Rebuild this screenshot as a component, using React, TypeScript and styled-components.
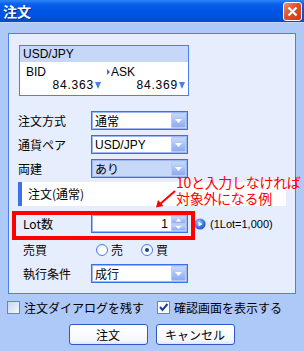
import styled, { createGlobalStyle } from "styled-components";

const GlobalStyle = createGlobalStyle`
  html, body {
    margin: 0;
    padding: 0;
    background: #aec8f8;
  }
  body {
    font-family: "Liberation Sans", "Noto Sans CJK JP", sans-serif;
    font-size: 12px;
    color: #000;
  }
`;

const DropArrow = () => (
  <DropButton>
    <svg width="15" height="15" viewBox="0 0 15 15">
      <path d="M4 6 L11 6 L7.5 10 Z" fill="#fff" />
    </svg>
  </DropButton>
);

const SelectBox = ({ value, active }: { value: string; active?: boolean }) => (
  <Select $active={active}>
    <SelectText>{value}</SelectText>
    <DropArrow />
  </Select>
);

const App = () => {
  return (
    <>
      <GlobalStyle />
      <Window>
        <TitleBar>
          <Title>注文</Title>
          <CloseButton>
            <svg width="11" height="11" viewBox="0 0 11 11">
              <path d="M1.5 1.5 L9.5 9.5 M9.5 1.5 L1.5 9.5" stroke="#fff" strokeWidth="2.2" />
            </svg>
          </CloseButton>
        </TitleBar>

        <Panel>
          <QuoteBox>
            <QuoteHeader>USD/JPY</QuoteHeader>
            <QuoteBody>
              <QuoteCol>
                <QuoteLabel $pad={6}>BID</QuoteLabel>
                <QuotePrice>
                  84.363<DownMark />
                </QuotePrice>
              </QuoteCol>
              <QuoteCol>
                <QuoteLabel $pad={3}>
                  <SideMark />
                  ASK
                </QuoteLabel>
                <QuotePrice>
                  84.369<DownMark />
                </QuotePrice>
              </QuoteCol>
            </QuoteBody>
          </QuoteBox>

          <Row $top={15} $indent={9}>
            <Label>注文方式</Label>
            <SelectBox value="通常" />
          </Row>
          <Row $top={5} $indent={9}>
            <Label>通貨ペア</Label>
            <SelectBox value="USD/JPY" />
          </Row>
          <Row $top={5} $indent={9}>
            <Label>両建</Label>
            <SelectBox value="あり" active />
          </Row>

          <SectionHeader>注文(通常)</SectionHeader>

          <LotRow>
            <Row $top={0} $indent={14}>
              <Label>Lot数</Label>
              <NumberBox>
                <NumberText>1</NumberText>
                <Spin>
                  <SpinHalf>
                    <svg width="15" height="8" viewBox="0 0 15 8">
                      <path d="M4.5 5.5 L10.5 5.5 L7.5 2.5 Z" fill="#fff" />
                    </svg>
                  </SpinHalf>
                  <SpinHalf>
                    <svg width="15" height="8" viewBox="0 0 15 8">
                      <path d="M4.5 2 L10.5 2 L7.5 5 Z" fill="#fff" />
                    </svg>
                  </SpinHalf>
                </Spin>
              </NumberBox>
            </Row>
            <InfoIcon>
              <svg width="12" height="12" viewBox="0 0 12 12">
                <defs>
                  <radialGradient id="ig" cx="40%" cy="35%" r="70%">
                    <stop offset="0%" stopColor="#a8c8ff" />
                    <stop offset="60%" stopColor="#3a78e8" />
                    <stop offset="100%" stopColor="#1d4fc0" />
                  </radialGradient>
                </defs>
                <circle cx="6" cy="6" r="5.6" fill="url(#ig)" />
                <path d="M4.6 3.4 L8.4 6 L4.6 8.6 Z" fill="#fff" />
              </svg>
            </InfoIcon>
            <Hint>(1Lot=1,000)</Hint>
            <RedFrame />
          </LotRow>

          <Row $top={7} $indent={14}>
            <Label>売買</Label>
            <RadioGroup>
              <RadioItem>
                <Radio />
                売
              </RadioItem>
              <RadioItem>
                <Radio $checked />
                買
              </RadioItem>
            </RadioGroup>
          </Row>

          <Row $top={5} $indent={14}>
            <Label>執行条件</Label>
            <SelectBox value="成行" />
          </Row>
        </Panel>

        <CheckRow>
          <CheckItem>
            <CheckBox />
            注文ダイアログを残す
          </CheckItem>
          <CheckItem>
            <CheckBox $checked>
              <svg width="11" height="11" viewBox="0 0 11 11">
                <path d="M2 5 L4.5 8 L9.5 2" stroke="#1c3f9c" strokeWidth="2" fill="none" />
              </svg>
            </CheckBox>
            確認画面を表示する
          </CheckItem>
        </CheckRow>

        <ButtonRow>
          <Button>注文</Button>
          <Button>キャンセル</Button>
        </ButtonRow>

        <Annotation>
          10と入力しなければ
          <br />
          対象外になる例
        </Annotation>
        <Arrow width="24" height="20" viewBox="0 0 24 20">
          <path d="M20 2 L4 16" stroke="#f00" strokeWidth="2" />
          <path d="M1 18.5 L3 11 L8.5 17 Z" fill="#f00" />
        </Arrow>
      </Window>
    </>
  );
};

const Window = styled.div`
  position: relative;
  width: 304px;
  height: 351px;
  background: #aec8f8;
  overflow: hidden;
`;

const TitleBar = styled.div`
  height: 22px;
  display: flex;
  align-items: center;
  justify-content: space-between;
  padding: 0 2px 0 3px;
  background: linear-gradient(
    #2f86f8 0%,
    #0a60ec 18%,
    #0055e4 50%,
    #0052de 80%,
    #0a48c8 100%
  );
  border-bottom: 1px solid #c6d8fa;
`;

const Title = styled.span`
  font-family: "Noto Sans CJK JP", sans-serif;
  font-weight: bold;
  font-size: 14px;
  color: #fff;
  text-shadow: 1px 1px 0 #0a2c90;
  line-height: 22px;
`;

const CloseButton = styled.div`
  width: 19px;
  height: 19px;
  box-sizing: border-box;
  border: 1px solid #fff;
  border-radius: 3px;
  background: linear-gradient(135deg, #f09070 0%, #e0502a 45%, #c83818 100%);
  display: flex;
  align-items: center;
  justify-content: center;
`;

const Panel = styled.div`
  margin: 10px 8px 0 8px;
  height: 261px;
  box-sizing: border-box;
  border: 1px solid #4c7fee;
  background: #e6eefd;
  padding-top: 11px;
`;

const QuoteBox = styled.div`
  margin-left: 10px;
  width: 170px;
  height: 51px;
  box-sizing: border-box;
  border: 1px solid #4a80f0;
  background: #fff;
`;

const QuoteHeader = styled.div`
  height: 16px;
  line-height: 16px;
  padding-left: 3px;
  background: #c6d7f8;
  font-size: 12px;
`;

const QuoteBody = styled.div`
  display: grid;
  grid-template-columns: 84px 84px;
  height: 33px;
`;

const QuoteCol = styled.div`
  display: flex;
  flex-direction: column;
  padding-top: 3px;
`;

const QuoteLabel = styled.div<{ $pad: number }>`
  display: flex;
  align-items: center;
  gap: 1px;
  padding-left: ${(p) => p.$pad}px;
  height: 13px;
  font-size: 12px;
`;

const SideMark = styled.span`
  width: 0;
  height: 0;
  border-top: 3px solid transparent;
  border-bottom: 3px solid transparent;
  border-left: 3px solid #3a6ee8;
`;

const QuotePrice = styled.div`
  display: flex;
  align-items: center;
  justify-content: flex-end;
  padding-right: 3px;
  height: 14px;
  font-size: 12px;
  letter-spacing: 0.8px;
`;

const DownMark = styled.span`
  margin-left: 1px;
  width: 0;
  height: 0;
  border-left: 3px solid transparent;
  border-right: 3px solid transparent;
  border-top: 7px solid #4a7ef0;
`;

const Row = styled.div<{ $top: number; $indent: number }>`
  display: grid;
  grid-template-columns: 82px 97px;
  align-items: center;
  height: 19px;
  margin-top: ${(p) => p.$top}px;
  & > :first-child {
    padding-left: ${(p) => p.$indent}px;
  }
`;

const Label = styled.span`
  font-family: "Noto Sans CJK JP", sans-serif;
  font-size: 12px;
  white-space: nowrap;
`;

const Select = styled.div<{ $active?: boolean }>`
  display: flex;
  align-items: center;
  justify-content: space-between;
  height: 19px;
  box-sizing: border-box;
  border: 1px solid #3c6ef0;
  box-shadow: inset 0 0 0 1px #9ab6f4;
  background: ${(p) => (p.$active ? "#c8d8f8" : "#fff")};
  padding: 0 1px 0 3px;
`;

const SelectText = styled.span`
  font-family: "Liberation Sans", "Noto Sans CJK JP", sans-serif;
  font-size: 12px;
`;

const DropButton = styled.div`
  width: 15px;
  height: 15px;
  box-sizing: border-box;
  border: 1px solid #b8ccf8;
  border-radius: 1px;
  background: linear-gradient(#c6d8fc, #8eabf2);
  display: flex;

  svg {
    margin: -1px;
  }
`;

const SectionHeader = styled.div`
  margin: 4px 9px 0 9px;
  height: 24px;
  box-sizing: border-box;
  background: #fff;
  border-left: 4px solid #3c70f0;
  padding-left: 6px;
  line-height: 24px;
  font-family: "Noto Sans CJK JP", sans-serif;
  font-size: 12px;
`;

const LotRow = styled.div`
  position: relative;
  display: flex;
  align-items: center;
  margin-top: 8px;
`;

const RedFrame = styled.div`
  position: absolute;
  left: 3px;
  top: -3px;
  width: 183px;
  height: 29px;
  box-sizing: border-box;
  border: 4px solid #f00;
  pointer-events: none;
`;

const NumberBox = styled.div`
  display: flex;
  align-items: center;
  justify-content: flex-end;
  height: 19px;
  box-sizing: border-box;
  border: 1px solid #3c6ef0;
  box-shadow: inset 0 0 0 1px #9ab6f4;
  background: #fff;
  padding: 0 1px;
`;

const NumberText = styled.span`
  font-size: 12px;
  margin-right: 3px;
`;

const Spin = styled.div`
  display: flex;
  flex-direction: column;
  width: 15px;
  height: 15px;
`;

const SpinHalf = styled.div`
  height: 7.5px;
  box-sizing: border-box;
  border: 1px solid #b8ccf8;
  background: linear-gradient(#c6d8fc, #8eabf2);
  overflow: hidden;
  display: flex;

  svg {
    margin: -1px;
  }
`;

const InfoIcon = styled.span`
  display: flex;
  margin-left: 6px;
`;

const Hint = styled.span`
  margin-left: 4px;
  font-size: 11px;
`;

const RadioGroup = styled.div`
  display: flex;
  gap: 18px;
  padding-left: 5px;
`;

const RadioItem = styled.label`
  display: flex;
  align-items: center;
  gap: 3px;
  font-family: "Noto Sans CJK JP", sans-serif;
  font-size: 12px;
`;

const Radio = styled.span<{ $checked?: boolean }>`
  position: relative;
  width: 12px;
  height: 12px;
  box-sizing: border-box;
  border-radius: 50%;
  border: 1px solid #4a7ce8;
  background: radial-gradient(circle at 60% 65%, #fff 30%, #d8e2f4 100%);

  &::after {
    content: "";
    display: ${(p) => (p.$checked ? "block" : "none")};
    position: absolute;
    left: 3px;
    top: 3px;
    width: 4px;
    height: 4px;
    border-radius: 50%;
    background: #21407c;
  }
`;

const CheckRow = styled.div`
  display: flex;
  gap: 13px;
  margin: 6px 0 0 7px;
  height: 15px;
`;

const CheckItem = styled.label`
  display: flex;
  align-items: center;
  gap: 4px;
  font-family: "Noto Sans CJK JP", sans-serif;
  font-size: 12px;
`;

const CheckBox = styled.span<{ $checked?: boolean }>`
  width: 13px;
  height: 13px;
  box-sizing: border-box;
  border: 1px solid #5c80e8;
  background: ${(p) =>
    p.$checked ? "#fff" : "linear-gradient(135deg, #c8d6f4 0%, #f4f7fe 100%)"};
  display: flex;
  align-items: center;
  justify-content: center;
`;

const ButtonRow = styled.div`
  display: flex;
  justify-content: center;
  gap: 8px;
  margin-top: 9px;
  padding-right: 1px;
`;

const Button = styled.button`
  width: 79px;
  height: 21px;
  padding: 0;
  border: 1px solid #2c58c8;
  border-radius: 3px;
  background: linear-gradient(#ffffff 0%, #f6f8fe 80%, #dfe6f6 100%);
  font-family: "Noto Sans CJK JP", sans-serif;
  font-size: 12px;
  color: #000;
`;

const Annotation = styled.div`
  position: absolute;
  left: 176px;
  top: 174px;
  font-family: "Noto Sans CJK JP", sans-serif;
  font-size: 14px;
  line-height: 16px;
  color: #f00;
  white-space: nowrap;
  letter-spacing: -0.3px;
`;

const Arrow = styled.svg`
  position: absolute;
  left: 155px;
  top: 189px;
`;

export default App;
